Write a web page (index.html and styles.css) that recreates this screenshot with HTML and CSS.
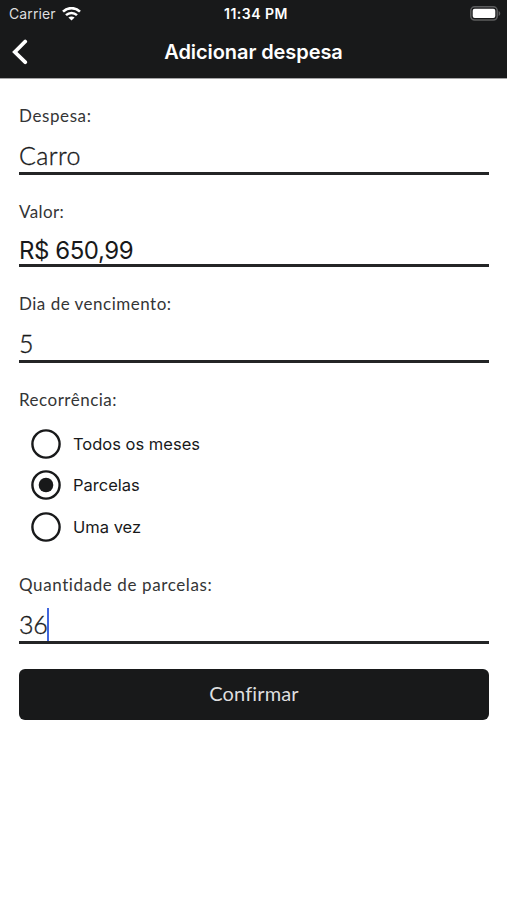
FILE: index.html
```html
<!DOCTYPE html>
<html lang="pt-BR">
<head>
<meta charset="utf-8">
<meta name="viewport" content="width=device-width, initial-scale=1">
<title>Adicionar despesa</title>
<link rel="stylesheet" href="styles.css">
</head>
<body>
<header class="header">
  <div class="status">
    <div class="status-left">
      <span class="carrier">Carrier</span>
      <svg class="wifi" width="19" height="14" viewBox="0 0 19 14" fill="none" stroke="currentColor" stroke-width="2.6">
        <path d="M1 4.6C5.8 0 13.2 0 18 4.6"/>
        <path d="M4 8.1c3.2-2.9 7.8-2.9 11 0"/>
        <path d="M9.5 13.6 6.4 10.6c1.7-1.5 4.5-1.5 6.2 0z" fill="currentColor" stroke="none"/>
      </svg>
    </div>
    <span class="clock">11:34 PM</span>
    <svg class="battery" width="31" height="15" viewBox="0 0 31 15">
      <rect x=".8" y=".8" width="26.4" height="13.2" rx="3.8" fill="none" stroke="#5c5d5e" stroke-width="1.5"/>
      <rect x="2.7" y="2.7" width="22.6" height="9.4" rx="2" fill="#fff"/>
      <path d="M28.6 4.9c2.2 1 2.2 4 0 5z" fill="#5c5d5e"/>
    </svg>
  </div>
  <nav class="nav">
    <svg class="back" width="16" height="26" viewBox="0 0 16 26" fill="none" stroke="currentColor" stroke-width="3.8" stroke-linecap="round" stroke-linejoin="miter">
      <path d="M13.2 2.5 2.8 13 13.2 23.2"/>
    </svg>
    <h1 class="title">Adicionar despesa</h1>
  </nav>
</header>
<main class="form">
  <section class="field">
    <div class="label">Despesa:</div>
    <div class="value">Carro</div>
  </section>
  <section class="field field-money">
    <div class="label label-short">Valor:</div>
    <div class="value money">R$ 650,99</div>
  </section>
  <section class="field">
    <div class="label label-date">Dia de vencimento:</div>
    <div class="value">5</div>
  </section>
  <section class="group">
    <div class="label label-date">Recorrência:</div>
    <div class="options">
      <div class="option">
        <svg class="radio" width="30" height="30" viewBox="0 0 30 30"><circle class="ring" cx="15" cy="15" r="13.6"/></svg>
        <span>Todos os meses</span>
      </div>
      <div class="option">
        <svg class="radio" width="30" height="30" viewBox="0 0 30 30"><circle class="ring" cx="15" cy="15" r="13.6"/><circle class="dot" cx="15" cy="15" r="7.3"/></svg>
        <span>Parcelas</span>
      </div>
      <div class="option">
        <svg class="radio" width="30" height="30" viewBox="0 0 30 30"><circle class="ring" cx="15" cy="15" r="13.6"/></svg>
        <span>Uma vez</span>
      </div>
    </div>
  </section>
  <section class="field">
    <div class="label">Quantidade de parcelas:</div>
    <div class="value value-active"><span>36</span><i class="caret"></i></div>
  </section>
  <div class="button"><span>Confirmar</span></div>
</main>
</body>
</html>
```
FILE: styles.css
```css
* { box-sizing: border-box; }
body { margin: 0; min-height: 900px; background: #fff; color: #18191a; font-family: Lato, sans-serif; }

.header { height: 79px; background: #18191a; color: #fff; border-bottom: 1px solid #a5a5a6; font-family: Inter, sans-serif; }
.status { height: 27px; padding: 0 6px 0 9px; display: grid; grid-template-columns: 1fr auto 1fr; align-items: center; font-size: 14px; line-height: 27px; }
.status-left { display: flex; align-items: center; gap: 6px; }
.carrier { color: #dededf; letter-spacing: .1px; }
.clock { margin-right: -2px; font-size: 14px; font-weight: 600; letter-spacing: .5px; }
.battery { justify-self: end; }
.nav { height: 50px; padding: 0 12px; display: grid; grid-template-columns: 16px 1fr 16px; align-items: center; }
.title { margin: 0; text-align: center; font-size: 20px; line-height: 50px; font-weight: 600; letter-spacing: -.08px; }

.form { padding: 26px 18px 0 19px; }
.field { height: 96px; }
.field-money { height: 92px; }
.label { height: 20px; font-size: 17px; line-height: 21px; letter-spacing: .6px; color: #343536; white-space: nowrap; }
.label-short { letter-spacing: .4px; }
.label-date { letter-spacing: .5px; }
.value { height: 50px; padding-top: 14px; display: flex; border-bottom: 3px solid #242526; font-size: 25px; font-weight: 300; line-height: 32px; letter-spacing: .4px; color: #18191a; -webkit-text-stroke: .35px #18191a; white-space: nowrap; }
.value-active { letter-spacing: -.3px; }
.money { height: 46px; padding-top: 14px; font-family: Inter, sans-serif; font-size: 24px; font-weight: 400; letter-spacing: -.45px; -webkit-text-stroke: 0; }
.caret { width: 2px; height: 33px; background: #4166dd; }

.group { height: 185px; }
.options { padding: 14px 0 0 12px; }
.option { height: 41.5px; display: flex; align-items: center; gap: 12px; font: 16.5px/20px Inter, sans-serif; white-space: nowrap; }
.ring { fill: none; stroke: #18191a; stroke-width: 2.4; }
.dot { fill: #18191a; }

.button { height: 51px; margin-top: -1px; padding-bottom: 3px; display: grid; place-items: center; border-radius: 6px; background: #18191a; color: #dededf; font-size: 20px; letter-spacing: .15px; }
```
